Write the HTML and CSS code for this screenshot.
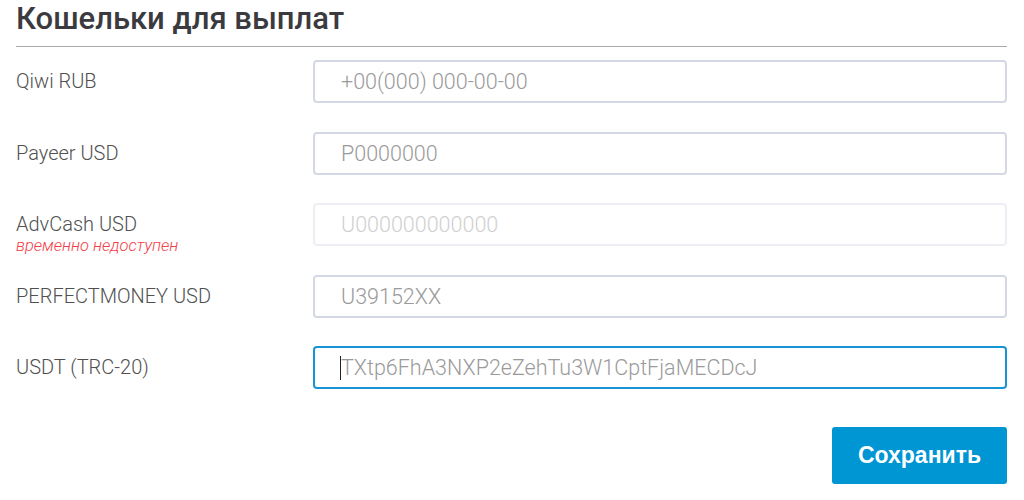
FILE: index.html
```html
<!DOCTYPE html>
<html lang="ru">
<head>
    <meta charset="UTF-8">
    <meta name="viewport" content="width=device-width, initial-scale=1.0">
    <title>Кошельки для выплат</title>
    <link rel="stylesheet" href="styles.css">
</head>
<body>
    <div class="wallets">
        <h1 class="wallets-title">Кошельки для выплат</h1>
        <form class="wallets-form">
            <div class="wallet-row">
                <label class="wallet-label">Qiwi RUB</label>
                <input class="wallet-input" type="text" placeholder="+00(000) 000-00-00">
            </div>
            <div class="wallet-row">
                <label class="wallet-label">Payeer USD</label>
                <input class="wallet-input" type="text" placeholder="P0000000">
            </div>
            <div class="wallet-row">
                <label class="wallet-label">AdvCash USD
                    <span class="wallet-note">временно недоступен</span>
                </label>
                <input class="wallet-input" type="text" placeholder="U000000000000" disabled>
            </div>
            <div class="wallet-row">
                <label class="wallet-label">PERFECTMONEY USD</label>
                <input class="wallet-input" type="text" placeholder="U39152XX">
            </div>
            <div class="wallet-row">
                <label class="wallet-label">USDT (TRC-20)</label>
                <div class="input-wrap">
                    <input class="wallet-input is-focused" type="text" placeholder="TXtp6FhA3NXP2eZehTu3W1CptFjaMECDcJ">
                    <span class="caret"></span>
                </div>
            </div>
            <div class="form-actions">
                <button class="btn-save" type="button">Сохранить</button>
            </div>
        </form>
    </div>
</body>
</html>
```

FILE: styles.css
```css
body {
    margin: 0;
    padding: 0;
    background: #fff;
    font-family: Roboto, "Liberation Sans", sans-serif;
}

.wallets {
    padding: 0 17px 0 16px;
}

.wallets-title {
    margin: 0;
    padding-bottom: 9px;
    font-size: 31px;
    line-height: 37px;
    font-weight: 500;
    color: #3a3a3f;
    border-bottom: 1px solid #a9a9ad;
}

.wallets-form {
    display: flex;
    flex-direction: column;
    gap: 28.5px;
    margin-top: 13px;
}

.wallet-row {
    display: grid;
    grid-template-columns: 297px 1fr;
    grid-template-rows: 43px;
    align-items: start;
}

.wallet-label {
    display: flex;
    flex-direction: column;
    font-size: 20px;
    line-height: 43px;
    font-weight: 300;
    color: #505050;
}

.wallet-note {
    margin-top: -9px;
    font-size: 16.5px;
    line-height: 18px;
    font-style: italic;
    font-weight: 300;
    color: #f23d48;
}

.wallet-input {
    box-sizing: border-box;
    width: 100%;
    height: 43px;
    padding: 0 26px;
    border: 2px solid #d3d8e4;
    border-radius: 4px;
    background: #fff;
    font-family: Roboto, "Liberation Sans", sans-serif;
    font-size: 21.5px;
    font-weight: 300;
    color: #555;
    outline: none;
}

.wallet-input::placeholder {
    color: #9a9a9a;
}

.wallet-input:disabled {
    border-color: #eceef3;
}

.wallet-input:disabled::placeholder {
    color: #cfcfcf;
}

.wallet-input.is-focused {
    border-color: #1694d4;
}

.input-wrap {
    position: relative;
}

.caret {
    position: absolute;
    left: 27px;
    top: 10px;
    width: 1px;
    height: 24px;
    background: #222;
}

.form-actions {
    display: flex;
    justify-content: flex-end;
    margin-top: 9px;
}

.btn-save {
    width: 175px;
    height: 57px;
    border: none;
    border-radius: 3px;
    background: #0095d3;
    color: #fff;
    font-family: "Liberation Sans", Arial, sans-serif;
    font-size: 23px;
    font-weight: bold;
}
```
